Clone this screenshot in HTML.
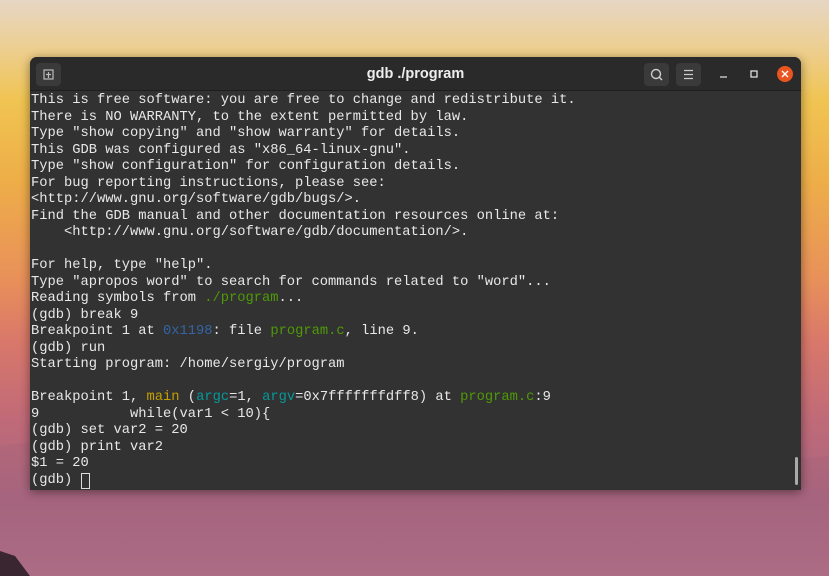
<!DOCTYPE html>
<html><head><meta charset="utf-8"><style>
html,body{margin:0;padding:0;width:829px;height:576px;overflow:hidden}
body{background:linear-gradient(180deg,#e6d6c4 0px,#ecd09a 40px,#f0c452 100px,#eeae48 180px,#e8905a 280px,#d9786a 340px,#c06a78 420px,#a86680 500px,#b07088 576px);position:relative;font-family:"Liberation Sans",sans-serif}
.mtn{position:absolute;left:0;bottom:0;width:829px;height:200px}
.win{position:absolute;left:30px;top:57px;width:771px;height:433px;background:#323232;border-radius:7px 7px 0 0;box-shadow:0 2px 10px rgba(0,0,0,.45);overflow:hidden}
.tb{height:33px;background:#2a2a2a;border-bottom:1px solid #1e1e1e;position:relative}
.title{position:absolute;left:0;right:0;top:9px;text-align:center;color:#eee;font-weight:bold;font-size:14.5px}
.btn{position:absolute;top:6px;width:25px;height:23px;background:#3a3a3a;border-radius:4px}
.term{position:absolute;left:1px;top:36px;font-family:"Liberation Mono",monospace;font-size:13.75px;line-height:16.5px;color:#e8e8e8;white-space:pre}
.y{color:#c4a000}.c{color:#06989a}.g{color:#4e9a06}.b{color:#3465a4}
.cur{display:inline-block;width:7px;height:14px;border:1px solid #ddd;vertical-align:top;margin-top:0px}
.sb{position:absolute;right:3px;top:400px;width:3px;height:28px;background:#aaa;border-radius:2px}
</style></head><body>
<svg class="mtn" viewBox="0 0 829 200" preserveAspectRatio="none">
<path d="M0 70 L80 60 L160 80 L260 55 L340 78 L430 65 L520 85 L620 72 L720 90 L829 80 L829 200 L0 200Z" fill="#9e5e78" opacity=".25"/>
<path d="M0 175 L15 180 L30 200 L0 200Z" fill="#3a2630"/>
</svg>
<div class="win">
<div class="tb">
<div class="btn" style="left:6px"><svg width="25" height="23"><rect x="8" y="7" width="9" height="9" fill="none" stroke="#bbb" stroke-width="1.2"/><path d="M12.5 9v6M10 11.5h5" stroke="#bbb" stroke-width="1.2"/></svg></div>
<div class="title">gdb ./program</div>
<div class="btn" style="left:614px"><svg width="25" height="23"><circle cx="12" cy="11" r="4.5" fill="none" stroke="#ccc" stroke-width="1.4"/><path d="M15 14l3 3" stroke="#ccc" stroke-width="1.5"/></svg></div>
<div class="btn" style="left:646px"><svg width="25" height="23"><path d="M8 7.5h9M8 11.5h9M8 15.5h9" stroke="#ccc" stroke-width="1.2"/></svg></div>
<svg style="position:absolute;left:686px;top:8px" width="90" height="20"><path d="M4 12h7" stroke="#ddd" stroke-width="1.3"/><rect x="35" y="6" width="6" height="6" fill="none" stroke="#ddd" stroke-width="1.3"/><circle cx="69" cy="9" r="8" fill="#e95420"/><path d="M66 6l6 6M72 6l-6 6" stroke="#fff" stroke-width="1.4"/></svg>
</div>
<div class="term">This is free software: you are free to change and redistribute it.
There is NO WARRANTY, to the extent permitted by law.
Type "show copying" and "show warranty" for details.
This GDB was configured as "x86_64-linux-gnu".
Type "show configuration" for configuration details.
For bug reporting instructions, please see:
&lt;http://www.gnu.org/software/gdb/bugs/&gt;.
Find the GDB manual and other documentation resources online at:
    &lt;http://www.gnu.org/software/gdb/documentation/&gt;.

For help, type "help".
Type "apropos word" to search for commands related to "word"...
Reading symbols from <span class="g">./program</span>...
(gdb) break 9
Breakpoint 1 at <span class="b">0x1198</span>: file <span class="g">program.c</span>, line 9.
(gdb) run
Starting program: /home/sergiy/program

Breakpoint 1, <span class="y">main</span> (<span class="c">argc</span>=1, <span class="c">argv</span>=0x7fffffffdff8) at <span class="g">program.c</span>:9
9           while(var1 &lt; 10){
(gdb) set var2 = 20
(gdb) print var2
$1 = 20
(gdb) <span class="cur"></span></div>
<div class="sb"></div>
</div>
</body></html>
